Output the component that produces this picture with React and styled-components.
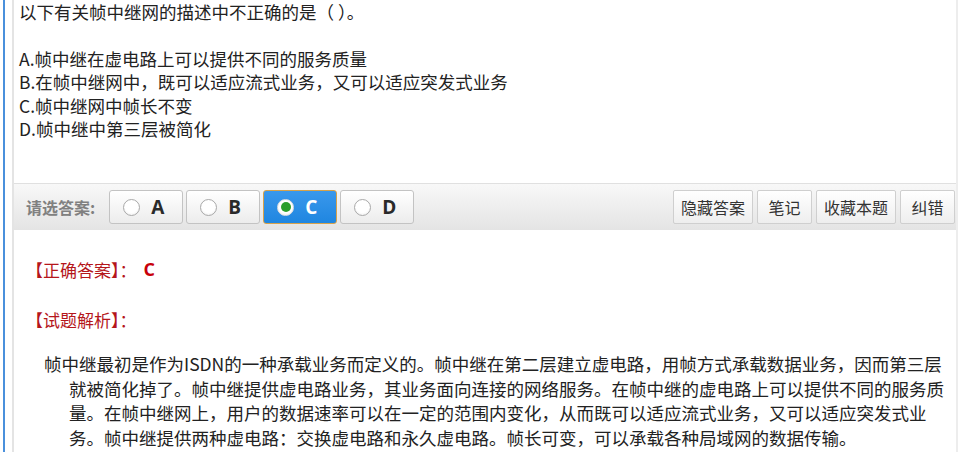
import React from 'react';
import styled, { createGlobalStyle } from 'styled-components';

//-----------Styled Component-----------//

const GlobalStyle = createGlobalStyle`
  html, body {
    margin: 0;
    padding: 0;
    background: #fff;
  }
  body {
    font-family: "Noto Sans CJK SC", "Microsoft YaHei", sans-serif;
    overflow: hidden;
  }
`;

const Frame = styled.div`
  margin-left: 3px;
  padding-left: 7px;
  height: 452px;
  border-left: 2px solid #4a90dc;
  box-sizing: border-box;
`;

const Panel = styled.div`
  height: 100%;
  border-left: 2px solid #e4e4e4;
  border-right: 2px solid #ededed;
  box-sizing: border-box;
  overflow: hidden;
`;

const Question = styled.div`
  padding-left: 5px;
  font-size: 17.5px;
  line-height: 23.4px;
  color: #222;
`;

const Line = styled.div`
  min-height: 23.4px;
  white-space: nowrap;
`;

const Toolbar = styled.div`
  margin-top: 43px;
  height: 47px;
  padding: 0 1px 0 12px;
  display: flex;
  align-items: center;
  border-top: 1px solid #e0e0e0;
  background: linear-gradient(#f8f8f8, #e4e4e4);
  box-sizing: border-box;
`;

const ToolLabel = styled.span`
  font-size: 16px;
  font-weight: bold;
  color: #808080;
  margin-right: 14px;
`;

const Options = styled.div`
  display: flex;
  gap: 3px;
`;

const OptionButton = styled.div`
  width: 74px;
  height: 34px;
  box-sizing: border-box;
  display: flex;
  align-items: center;
  padding-left: 13px;
  gap: 11px;
  border-radius: 3px;
  border: 1px solid ${p => (p.$active ? '#d6a24c' : '#c3c3c3')};
  background: ${p =>
    p.$active
      ? 'linear-gradient(#3a98ec, #1f86e0)'
      : 'linear-gradient(#ffffff, #ececec)'};
  color: ${p => (p.$active ? '#fff' : '#2a2a2a')};
  font-family: "Open Sans", "Noto Sans", sans-serif;
  font-size: 19px;
  font-weight: bold;
`;

const Radio = styled.span`
  flex: none;
  width: 17px;
  height: 17px;
  border-radius: 50%;
  box-sizing: border-box;
  border: 1px solid ${p => (p.$checked ? '#e0e0e0' : '#a9a9a9')};
  background: radial-gradient(circle at 50% 40%, #ffffff 55%, #e6e6e6);
  display: flex;
  align-items: center;
  justify-content: center;
  &::after {
    content: '';
    display: ${p => (p.$checked ? 'block' : 'none')};
    width: 10px;
    height: 10px;
    border-radius: 50%;
    background: #2b9e2b;
  }
`;

const Spacer = styled.div`
  flex: 1;
`;

const Actions = styled.div`
  display: flex;
  gap: 4px;
`;

const ActionButton = styled.div`
  min-width: 55px;
  height: 34px;
  padding: 0 7px;
  box-sizing: border-box;
  display: flex;
  align-items: center;
  justify-content: center;
  border: 1px solid #cfcfcf;
  border-radius: 2px;
  background: linear-gradient(#ffffff, #eeeeee);
  font-size: 16px;
  color: #333;
`;

const Result = styled.div`
  padding-left: 12px;
`;

const RedLabel = styled.div`
  display: flex;
  align-items: center;
  height: 24px;
  margin-top: ${p => p.$top}px;
  font-size: 17px;
  color: #b5161b;
`;

const AnswerLetter = styled.span`
  margin-left: 7px;
  font-family: "Open Sans", "Noto Sans", sans-serif;
  font-size: 18px;
  font-weight: bold;
  color: #c8000a;
`;

const Analysis = styled.p`
  margin: 21px 0 0;
  padding-left: 55px;
  text-indent: -25px;
  font-size: 17.5px;
  line-height: 24.5px;
  color: #222;
  white-space: nowrap;
`;

//--------------------------------------------//

const options = ['A', 'B', 'C', 'D'];
const actions = ['隐藏答案', '笔记', '收藏本题', '纠错'];
const selected = 'C';

const analysisLines = [
  '帧中继最初是作为ISDN的一种承载业务而定义的。帧中继在第二层建立虚电路，用帧方式承载数据业务，因而第三层',
  '就被简化掉了。帧中继提供虚电路业务，其业务面向连接的网络服务。在帧中继的虚电路上可以提供不同的服务质',
  '量。在帧中继网上，用户的数据速率可以在一定的范围内变化，从而既可以适应流式业务，又可以适应突发式业',
  '务。帧中继提供两种虚电路：交换虚电路和永久虚电路。帧长可变，可以承载各种局域网的数据传输。'
];

const App = () => {
  return (
    <>
      <GlobalStyle />
      <Frame>
        <Panel>
          <Question>
            <Line>以下有关帧中继网的描述中不正确的是（ ）。</Line>
            <Line />
            <Line>A.帧中继在虚电路上可以提供不同的服务质量</Line>
            <Line>B.在帧中继网中，既可以适应流式业务，又可以适应突发式业务</Line>
            <Line>C.帧中继网中帧长不变</Line>
            <Line>D.帧中继中第三层被简化</Line>
          </Question>

          <Toolbar>
            <ToolLabel>请选答案:</ToolLabel>
            <Options>
              {options.map(o => (
                <OptionButton key={o} $active={o === selected}>
                  <Radio $checked={o === selected} />
                  {o}
                </OptionButton>
              ))}
            </Options>
            <Spacer />
            <Actions>
              {actions.map(a => (
                <ActionButton key={a}>{a}</ActionButton>
              ))}
            </Actions>
          </Toolbar>

          <Result>
            <RedLabel $top={27}>
              【正确答案】：<AnswerLetter>C</AnswerLetter>
            </RedLabel>
            <RedLabel $top={26}>【试题解析】：</RedLabel>
          </Result>

          <Analysis>
            {analysisLines.map((l, i) => (
              <React.Fragment key={i}>
                {l}
                {i < analysisLines.length - 1 && <br />}
              </React.Fragment>
            ))}
          </Analysis>
        </Panel>
      </Frame>
    </>
  );
};

export default App;
